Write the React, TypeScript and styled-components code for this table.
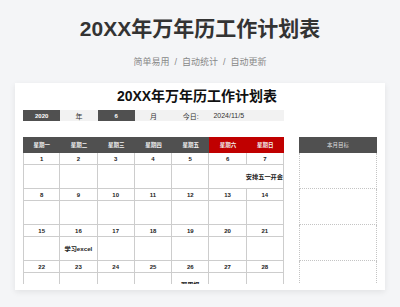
import React from "react";
import styled, { createGlobalStyle } from "styled-components";

const GlobalStyle = createGlobalStyle`
  html, body { margin: 0; padding: 0; background: #f4f5f7; }
  body { font-family: "Liberation Sans", "Noto Sans CJK SC", sans-serif; }
  * { box-sizing: border-box; }
`;

const Page = styled.div`
  width: 400px;
  height: 307px;
  overflow: hidden;
  display: flex;
  flex-direction: column;
  align-items: center;
  padding-top: 15px;
  background: #f4f5f7;
`;

const Title = styled.h1`
  margin: 0;
  font-size: 21px;
  line-height: 28px;
  font-weight: 700;
  color: #333;
`;

const Subtitle = styled.div`
  margin-top: 12px;
  display: flex;
  font-size: 9px;
  line-height: 14px;
  color: #888;
`;

const Sep = styled.span`
  margin: 0 5px;
`;

const Card = styled.div`
  margin-top: 14px;
  width: 370px;
  background: #fff;
  box-shadow: 0 2px 6px rgba(0, 0, 0, 0.08);
  padding: 5px 8px 6px;
`;

const SheetTitle = styled.div`
  font-size: 14px;
  line-height: 17px;
  font-weight: 700;
  color: #111;
  text-align: center;
  padding-right: 6px;
`;

const InfoRow = styled.div`
  margin-top: 5px;
  width: 261px;
  height: 11px;
  display: grid;
  grid-template-columns: repeat(7, 1fr);
`;

const InfoCell = styled.div<{ $dark?: boolean; $span?: number; $left?: boolean }>`
  grid-column: span ${(p) => p.$span ?? 1};
  display: flex;
  align-items: center;
  justify-content: ${(p) => (p.$left ? "flex-start" : "center")};
  padding-left: ${(p) => (p.$left ? "4px" : "0")};
  background: ${(p) => (p.$dark ? "#505050" : "#f2f2f2")};
  color: ${(p) => (p.$dark ? "#fff" : "#333")};
  font-size: ${(p) => (p.$dark ? "6px" : "7px")};
  font-weight: ${(p) => (p.$dark ? 700 : 400)};
`;

const Main = styled.div`
  margin-top: 16px;
  height: 147px;
  overflow: hidden;
  display: flex;
  gap: 15px;
`;

const Calendar = styled.div`
  width: 261px;
  display: grid;
  grid-template-columns: repeat(7, 1fr);
  align-content: start;
`;

const HeadCell = styled.div<{ $weekend?: boolean }>`
  height: 16px;
  display: flex;
  align-items: center;
  justify-content: center;
  background: ${(p) => (p.$weekend ? "#c00000" : "#505050")};
  color: #f2f2f2;
  font-size: 5.5px;
  font-weight: 700;
`;

const DayCell = styled.div<{ $first?: boolean }>`
  height: 12px;
  display: flex;
  align-items: center;
  justify-content: center;
  border-right: 1px solid #cdcdcd;
  border-bottom: 1px solid #cdcdcd;
  border-left: ${(p) => (p.$first ? "1px solid #cdcdcd" : "none")};
  font-size: 6px;
  font-weight: 700;
  color: #222;
`;

const NoteCell = styled.div<{ $first?: boolean; $span?: number; $right?: boolean }>`
  grid-column: span ${(p) => p.$span ?? 1};
  height: 24px;
  display: flex;
  align-items: center;
  justify-content: ${(p) => (p.$right ? "flex-end" : "center")};
  border-right: 1px solid #cdcdcd;
  border-bottom: 1px solid #cdcdcd;
  border-left: ${(p) => (p.$first ? "1px solid #cdcdcd" : "none")};
  font-size: 6.2px;
  font-weight: 700;
  color: #222;
  white-space: nowrap;
`;

const Goals = styled.div`
  width: 78px;
  display: flex;
  flex-direction: column;
`;

const GoalsHead = styled.div`
  height: 16px;
  flex: none;
  display: flex;
  align-items: center;
  justify-content: center;
  background: #505050;
  color: #ddd;
  font-size: 5.5px;
`;

const GoalRow = styled.div`
  height: 36px;
  flex: none;
  border-left: 1px dotted #c4c4c4;
  border-right: 1px dotted #c4c4c4;
  border-bottom: 1px dotted #c4c4c4;
`;

const weekdays = ["星期一", "星期二", "星期三", "星期四", "星期五", "星期六", "星期日"];

type Note = { col: number; span?: number; text: string; right?: boolean };

const weeks: { start: number; notes: Note[] }[] = [
  { start: 1, notes: [{ col: 5, span: 2, text: "安排五一开会", right: true }] },
  { start: 8, notes: [] },
  { start: 15, notes: [{ col: 1, text: "学习excel" }] },
  { start: 22, notes: [{ col: 4, text: "写周报" }] },
];

function WeekRows({ start, notes }: { start: number; notes: Note[] }) {
  const cells: React.ReactNode[] = [];
  let c = 0;
  while (c < 7) {
    const note = notes.find((n) => n.col === c);
    const span = note?.span ?? 1;
    cells.push(
      <NoteCell key={`n${c}`} $first={c === 0} $span={span} $right={note?.right}>
        {note?.text}
      </NoteCell>
    );
    c += span;
  }
  return (
    <>
      {Array.from({ length: 7 }, (_, i) => (
        <DayCell key={`d${i}`} $first={i === 0}>
          {start + i}
        </DayCell>
      ))}
      {cells}
    </>
  );
}

export default function App() {
  return (
    <>
      <GlobalStyle />
      <Page>
        <Title>20XX年万年历工作计划表</Title>
        <Subtitle>
          <span>简单易用</span>
          <Sep>/</Sep>
          <span>自动统计</span>
          <Sep>/</Sep>
          <span>自动更新</span>
        </Subtitle>
        <Card>
          <SheetTitle>20XX年万年历工作计划表</SheetTitle>
          <InfoRow>
            <InfoCell $dark>2020</InfoCell>
            <InfoCell>年</InfoCell>
            <InfoCell $dark>6</InfoCell>
            <InfoCell>月</InfoCell>
            <InfoCell>今日:</InfoCell>
            <InfoCell $span={2} $left>
              2024/11/5
            </InfoCell>
          </InfoRow>
          <Main>
            <Calendar>
              {weekdays.map((d, i) => (
                <HeadCell key={d} $weekend={i >= 5}>
                  {d}
                </HeadCell>
              ))}
              {weeks.map((w) => (
                <WeekRows key={w.start} start={w.start} notes={w.notes} />
              ))}
            </Calendar>
            <Goals>
              <GoalsHead>本月目标</GoalsHead>
              <GoalRow />
              <GoalRow />
              <GoalRow />
              <GoalRow />
            </Goals>
          </Main>
        </Card>
      </Page>
    </>
  );
}
